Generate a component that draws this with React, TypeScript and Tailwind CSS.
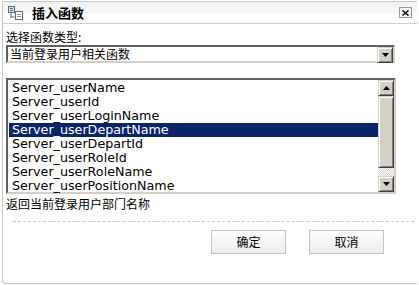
import React from 'react';

const functions = [
  'Server_userName',
  'Server_userId',
  'Server_userLoginName',
  'Server_userDepartName',
  'Server_userDepartId',
  'Server_userRoleId',
  'Server_userRoleName',
  'Server_userPositionName',
];

const cjk = "font-['SimSun','Noto_Sans_CJK_SC',sans-serif]";

function DialogIcon() {
  return (
    <svg width="16" height="14" viewBox="0 0 16 14" className="shrink-0">
      <rect x="0.5" y="0.5" width="6" height="6" fill="#dfe6ef" stroke="#5a6b80" />
      <rect x="2" y="2" width="3" height="1" fill="#5a6b80" />
      <rect x="2" y="4" width="3" height="1" fill="#5a6b80" />
      <rect x="2.5" y="6.5" width="1" height="5" fill="#5a6b80" />
      <rect x="2.5" y="10.5" width="4" height="1" fill="#5a6b80" />
      <rect x="7.5" y="5.5" width="7" height="8" fill="#ffffff" stroke="#5a6b80" />
      <rect x="9" y="8" width="4" height="1" fill="#7d8ea3" />
      <rect x="9" y="10" width="4" height="1" fill="#7d8ea3" />
    </svg>
  );
}

function Arrow({ up }: { up?: boolean }) {
  return (
    <svg width="7" height="4" viewBox="0 0 7 4">
      <path d={up ? 'M3.5 0 L7 4 L0 4 Z' : 'M0 0 L7 0 L3.5 4 Z'} fill="#000" />
    </svg>
  );
}

function ScrollButton({ up }: { up?: boolean }) {
  return (
    <div className="flex h-[16px] w-[16px] items-center justify-center border border-t-[#d4d0c8] border-l-[#d4d0c8] border-r-[#404040] border-b-[#404040] bg-[#d4d0c8] shadow-[inset_1px_1px_0_#fff,inset_-1px_-1px_0_#808080]">
      <Arrow up={up} />
    </div>
  );
}

export default function App() {
  return (
    <div className="relative h-[285px] w-[419px] overflow-hidden bg-white">
      <div className="ml-[2px] mt-[1px] flex h-[283px] w-[415px] flex-col rounded-bl-[3px] border-b border-l border-t border-[#c6c6c6]">
        <div className="flex h-[22px] items-center border-b border-[#cdcdcd] bg-[linear-gradient(#f3f3f3_0%,#f6f6f6_50%,#ffffff_51%,#ffffff_100%)] pl-[5px] pr-[5px]">
          <DialogIcon />
          <span className={`ml-[8px] text-[13px] font-bold leading-none text-black ${cjk}`}>插入函数</span>
          <div className="ml-auto flex h-[11px] w-[13px] items-center justify-center border border-[#9a9a9a] bg-[#f4f4f4]">
            <svg width="7" height="6" viewBox="0 0 7 6">
              <path d="M0.5 0.5 L6.5 5.5 M6.5 0.5 L0.5 5.5" stroke="#000" strokeWidth="1.4" />
            </svg>
          </div>
        </div>

        <div className="flex flex-col pl-[3px] pr-[19px]">
          <div className={`mt-[5px] h-[16px] text-[12px] leading-[16px] text-black ${cjk}`}>选择函数类型:</div>
          <div className="flex h-[18px] w-[389px] items-stretch border-2 border-t-[#5f5f5f] border-l-[#5f5f5f] border-r-[#d4d0c8] border-b-[#d4d0c8] bg-white">
            <span className={`flex-1 pl-[2px] text-[12px] leading-[14px] text-black ${cjk}`}>当前登录用户相关函数</span>
            <ScrollButton />
          </div>

          <div className="mt-[15px] flex h-[116px] w-[390px] border-2 border-t-[#5f5f5f] border-l-[#5f5f5f] border-r-[#d4d0c8] border-b-[#d4d0c8] bg-white">
            <div className="flex flex-1 flex-col pl-[1px] pt-[1px]">
              {functions.map((f) => (
                <div
                  key={f}
                  className={`h-[14px] pl-[3px] font-['DejaVu_Sans',sans-serif] text-[12.7px] leading-[14px] ${
                    f === 'Server_userDepartName' ? 'bg-[#0a246a] text-white' : 'text-black'
                  }`}
                >
                  {f}
                </div>
              ))}
            </div>
            <div className="flex w-[16px] flex-col">
              <ScrollButton up />
              <div className="h-[72px] border border-t-[#d4d0c8] border-l-[#d4d0c8] border-r-[#404040] border-b-[#404040] bg-[#d4d0c8] shadow-[inset_1px_1px_0_#fff,inset_-1px_-1px_0_#808080]" />
              <div className="flex-1 bg-[repeating-conic-gradient(#d4d0c8_0_25%,#ffffff_0_50%)] bg-[length:2px_2px]" />
              <ScrollButton />
            </div>
          </div>

          <div className={`mt-[2px] h-[16px] text-[12px] leading-[16px] text-black ${cjk}`}>返回当前登录用户部门名称</div>
        </div>

        <div className="ml-[10px] mr-[3px] mt-[9px] border-t border-dashed border-[#c8c8c8]" />

        <div className="mt-[8px] flex justify-end gap-[23px] pr-[33px]">
          {['确定', '取消'].map((t) => (
            <button
              key={t}
              className={`h-[24px] w-[75px] border border-[#c4c4c4] bg-[linear-gradient(#ffffff_0%,#f8f8f8_30%,#ededed_100%)] text-[12px] leading-none text-black ${cjk}`}
            >
              {t}
            </button>
          ))}
        </div>
      </div>
    </div>
  );
}
